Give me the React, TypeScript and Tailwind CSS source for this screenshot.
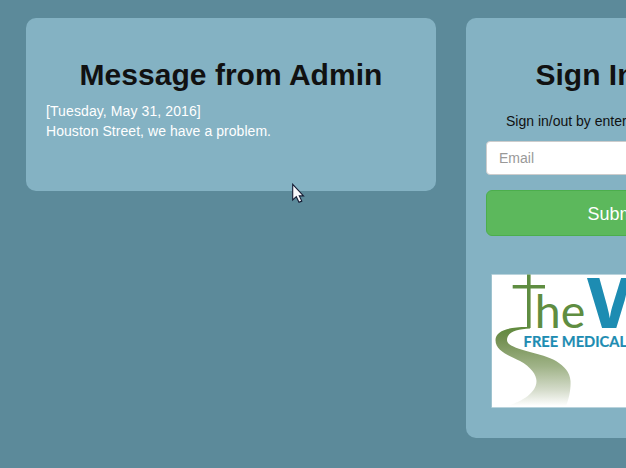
function Logo() {
  return (
    <svg className="block h-[134px] w-[135px] shrink-0" viewBox="491 274 135 134">
      <defs>
        <linearGradient id="road" gradientUnits="userSpaceOnUse" x1="0" y1="327" x2="0" y2="406">
          <stop offset="0" stopColor="#5f8a3c" />
          <stop offset="0.15" stopColor="#728f50" />
          <stop offset="0.5" stopColor="#a0b388" />
          <stop offset="0.8" stopColor="#d5dccb" />
          <stop offset="1" stopColor="#ffffff" />
        </linearGradient>
      </defs>
      <rect x="491.5" y="274" width="135" height="134" fill="#b9d3dc" />
      <rect x="492" y="275" width="134" height="132" fill="#fff" />
      <path
        d="M530 327 C511 326.5 495.5 330 495.5 340 C495.5 352 511 356 520 361 C531 367 536.5 375 536.5 381 C536.5 393 522 401 508 406 L566 406 C569 399 571 389 570.5 381 C570 372 564 366 556 361 C541 352 507 350 507 340 C507 332 517 329 530 328.5Z"
        fill="url(#road)"
      />
      <path d="M527 274.5h3.6V328h-3.6zM512.7 285H545v3.5h-32.3z" fill="#5f8d41" />
      <text x="534.8" y="327.8" fontSize="46" textLength="50.5" lengthAdjust="spacingAndGlyphs" fill="#5f8d41" className="font-['Lato']">he</text>
      <text x="587" y="327.5" fontSize="69" textLength="80" lengthAdjust="spacingAndGlyphs" fill="#1d8cb2" className="font-['Open_Sans'] font-bold">W</text>
      <text x="523.6" y="346.5" fontSize="15.4" textLength="103.5" lengthAdjust="spacingAndGlyphs" fill="#1d8cb2" stroke="#1d8cb2" strokeWidth="0.2" className="font-['Lato'] font-bold">FREE MEDICAL</text>
    </svg>
  );
}

function Cursor() {
  return (
    <svg className="absolute left-[292px] top-[183px] h-[22px] w-[14px]" viewBox="0 0 14 22">
      <path d="M.7 1.3v15.7l3.6-3.3 2.7 5.6 2.8-1.2-2.5-5.2h4.2z" fill="#f8f8fb" stroke="#141b33" strokeWidth="1.1" />
    </svg>
  );
}

export default function App() {
  return (
    <div className="relative flex h-[468px] w-[626px] items-start gap-[30px] overflow-hidden bg-[#5c8a9a] pl-[26px] pt-[18px] font-['Liberation_Sans',Arial,sans-serif] text-sm leading-5">
      <section className="h-[173px] w-[410px] shrink-0 rounded-[10px] bg-[#84b2c3] px-5 pt-10">
        <h1 className="text-center text-[30px] font-bold leading-[33px] tracking-[0.03px] text-[#111]">Message from Admin</h1>
        <p className="mt-[10px] text-white">
          <span className="tracking-[0.1px]">[Tuesday, May 31, 2016]</span>
          <br />
          <span className="tracking-[0.05px]">Houston Street, we have a problem.</span>
        </p>
      </section>
      <section className="h-[420px] w-[410px] shrink-0 rounded-[10px] bg-[#84b2c3] px-5 pt-10">
        <h1 className="whitespace-nowrap pl-[49.5px] text-[30px] font-bold leading-[33px] text-[#111]">Sign In</h1>
        <p className="mt-5 whitespace-nowrap pl-5 text-[#111]">Sign in/out by enter</p>
        <input
          className="mt-[10px] block h-[34px] w-[370px] rounded border border-[#ccc] bg-white px-3 text-sm placeholder:text-[#999]"
          placeholder="Email"
        />
        <button className="mt-[15px] block h-[46px] w-[370px] rounded-md border border-[#4cae4c] bg-[#5cb85c] pl-[100.5px] pt-[2px] text-left text-lg text-white">
          Submit
        </button>
        <div className="mt-[38px] pl-[5px]">
          <Logo />
        </div>
      </section>
      <Cursor />
    </div>
  );
}
